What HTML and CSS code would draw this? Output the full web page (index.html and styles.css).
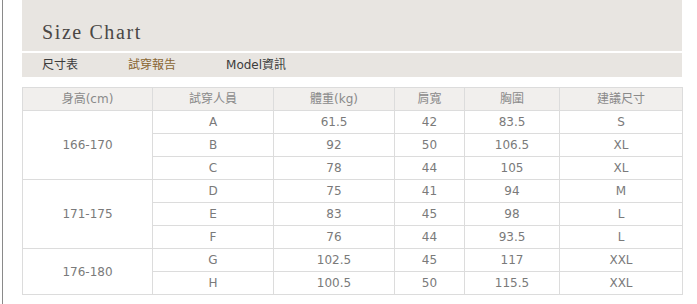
FILE: index.html
```html
<!DOCTYPE html>
<html lang="zh-Hant">
<head>
<meta charset="utf-8">
<title>Size Chart</title>
<link rel="stylesheet" href="styles.css">
</head>
<body>
<div class="page">
  <div class="head">
    <div class="title">Size Chart</div>
    <div class="tabs">
      <span class="tab">尺寸表</span>
      <span class="tab active">試穿報告</span>
      <span class="tab">Model資訊</span>
    </div>
  </div>
  <table class="chart">
    <colgroup>
      <col class="c1"><col class="c2"><col class="c3"><col class="c4"><col class="c5"><col class="c6">
    </colgroup>
    <thead>
      <tr><th>身高(cm)</th><th>試穿人員</th><th>體重(kg)</th><th>肩寬</th><th>胸圍</th><th>建議尺寸</th></tr>
    </thead>
    <tbody>
      <tr><td rowspan="3">166-170</td><td>A</td><td>61.5</td><td>42</td><td>83.5</td><td>S</td></tr>
      <tr><td>B</td><td>92</td><td>50</td><td>106.5</td><td>XL</td></tr>
      <tr><td>C</td><td>78</td><td>44</td><td>105</td><td>XL</td></tr>
      <tr><td rowspan="3">171-175</td><td>D</td><td>75</td><td>41</td><td>94</td><td>M</td></tr>
      <tr><td>E</td><td>83</td><td>45</td><td>98</td><td>L</td></tr>
      <tr><td>F</td><td>76</td><td>44</td><td>93.5</td><td>L</td></tr>
      <tr><td rowspan="2">176-180</td><td>G</td><td>102.5</td><td>45</td><td>117</td><td>XXL</td></tr>
      <tr><td>H</td><td>100.5</td><td>50</td><td>115.5</td><td>XXL</td></tr>
    </tbody>
  </table>
</div>
</body>
</html>
```
FILE: styles.css
```css
html, body {
  margin: 0;
  padding: 0;
  background: #ffffff;
}
.page {
  margin-left: 2px;
  border-left: 1px solid #8a8a8a;
  padding-left: 19px;
  height: 304px;
  box-sizing: border-box;
  font-family: "DejaVu Sans", "Noto Sans CJK TC", sans-serif;
}
.head {
  width: 660px;
}
.title {
  height: 51px;
  background: #e8e5e1;
  box-sizing: border-box;
  padding: 20px 0 0 20px;
  font-family: "Liberation Serif", serif;
  font-size: 20px;
  line-height: 24px;
  letter-spacing: 1.6px;
  color: #4a4745;
}
.tabs {
  margin-top: 2px;
  height: 24px;
  background: #e8e5e1;
  display: flex;
  align-items: center;
  gap: 50px;
  padding-left: 20px;
  font-size: 12px;
  color: #3c3c3c;
}
.tab {
  font-family: "DejaVu Sans", "Noto Sans CJK TC", sans-serif;
  line-height: 16px;
}
.tab.active {
  color: #8a6532;
}
.chart {
  margin-top: 10px;
  width: 660px;
  border-collapse: collapse;
  table-layout: fixed;
  font-size: 12px;
  color: #7a7a7a;
}
.c1 { width: 130px; }
.c2 { width: 121px; }
.c3 { width: 121px; }
.c4 { width: 70px; }
.c5 { width: 95px; }
.c6 { width: 123px; }
.chart th,
.chart td {
  border: 1px solid #dcdcdc;
  padding: 0;
  height: 22px;
  line-height: 20px;
  text-align: center;
  font-weight: normal;
}
.chart th {
  background: #f1efed;
  color: #8a8a8a;
}
```
